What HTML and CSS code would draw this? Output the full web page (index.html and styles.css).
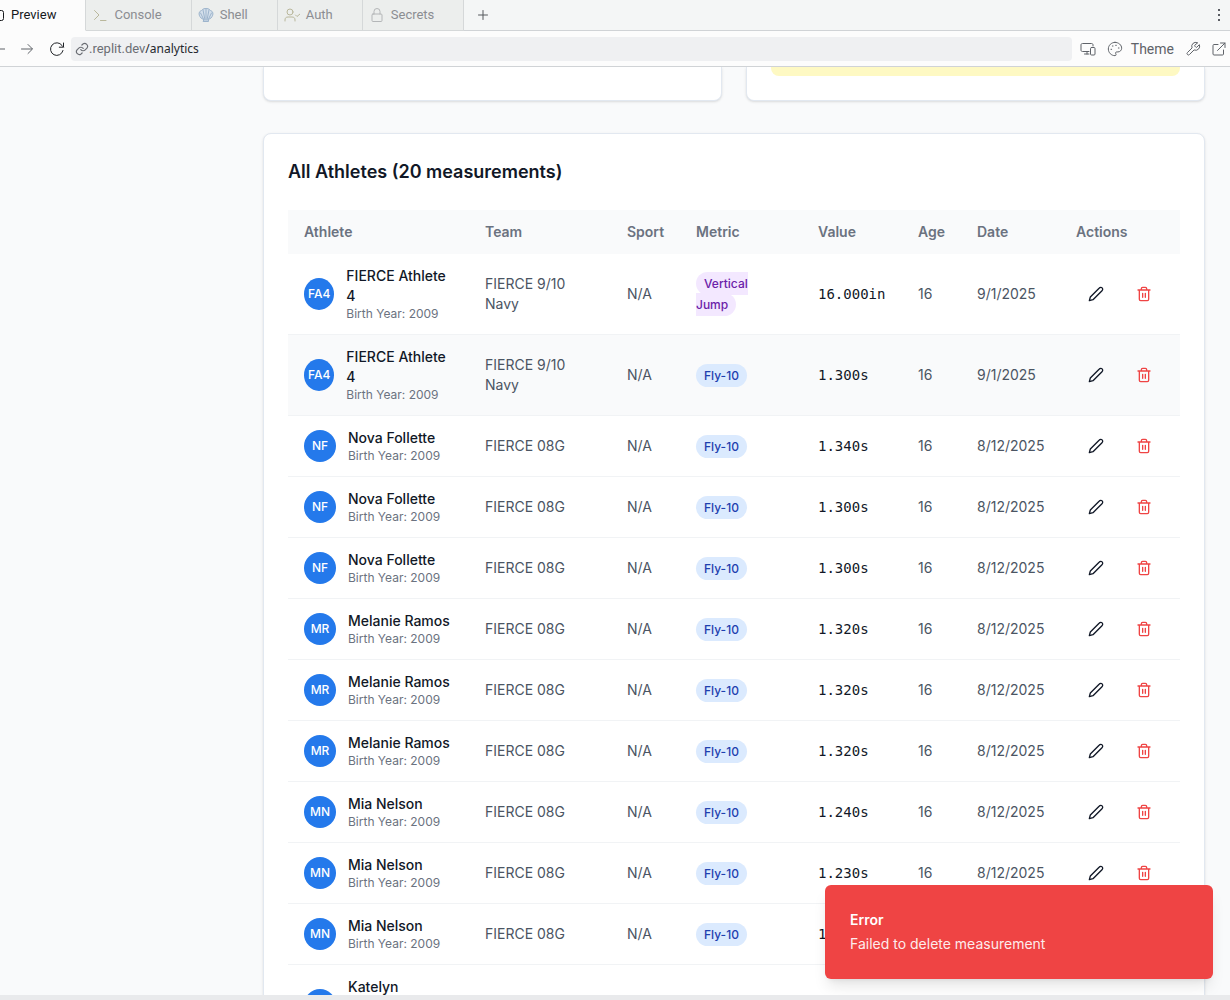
FILE: index.html
```html
<!DOCTYPE html>
<html lang="en">
<head>
<meta charset="utf-8">
<meta name="viewport" content="width=device-width, initial-scale=1">
<title>Analytics</title>
<link rel="stylesheet" href="styles.css">
</head>
<body>
<svg class="sprite" aria-hidden="true">
  <symbol id="pencil" viewBox="0 0 24 24"><path d="M17 3a2.85 2.83 0 1 1 4 4L7.500 20.500 2 22l1.500-5.500Z"/></symbol>
  <symbol id="trash" viewBox="0 0 24 24"><path d="M3 6h18M19 6v14c0 1-1 2-2 2H7c-1 0-2-1-2-2V6M8 6V4c0-1 1-2 2-2h4c1 0 2 1 2 2v2M10 11v6M14 11v6"/></symbol>
</svg>
<div class="window">
  <nav class="tabs">
    <button class="tab tab--active"><svg width="5" height="16" viewBox="11 0 5 16"><rect x="2" y="3.500" width="12.500" height="10" rx="2"/></svg>Preview</button>
    <button class="tab"><svg class="olive" width="16" height="16" viewBox="0 0 16 16"><path d="M2.500 3.500L7 8l-4.500 4.500M8.500 13.500h5.500"/></svg>Console</button>
    <button class="tab"><svg class="shell" width="16" height="16" viewBox="0 0 16 16"><path d="M5.500 12.500L3 11C-.5 7 1.500 4 3.500 3.500 5 1.500 7 1.500 8 1.500s3 0 4.500 2C14.500 4 16.500 7 13 11l-2.500 1.500v2h-5zM8 2v11M5 3l2 10M11 3L9 13M2.500 6L6 13M13.500 6L10 13"/></svg>Shell</button>
    <button class="tab"><svg class="olive" width="16" height="16" viewBox="0 0 16 16"><circle cx="6" cy="5" r="3"/><path d="M1 14v-1c0-2 1-3 3-3h4c2 0 3 1 3 3v1M11.500 8l1.500 1.500L16 7"/></svg>Auth</button>
    <button class="tab"><svg class="grey" width="16" height="16" viewBox="0 0 16 16"><rect x="3" y="7" width="10" height="7.500" rx="1"/><path d="M5 7V4.500a3 3 0 0 1 6 0V7"/></svg>Secrets</button>
    <button class="tab-new" aria-label="New tab"><svg width="10" height="10" viewBox="0 0 10 10"><path d="M5 .5v9M.5 5h9"/></svg></button>
    <button class="tab-menu" aria-label="Tab menu"><svg width="4" height="14" viewBox="0 0 4 14"><path d="M1 1h2v2H1zM1 6h2v2H1zM1 11h2v2H1z"/></svg></button>
  </nav>
  <div class="toolbar">
    <button aria-label="Back"><svg width="5" height="14" viewBox="9 0 5 14"><path d="M1 7h13"/></svg></button>
    <button aria-label="Forward"><svg width="14" height="14" viewBox="0 0 14 14"><path d="M1.500 7h10.500M8 2.500L12.500 7 8 11.500"/></svg></button>
    <button class="reload" aria-label="Reload"><svg width="16" height="16" viewBox="0 0 16 16"><path d="M14 9.500A6.300 6.300 0 1 1 13 4.500l1.500 1.500M14.500 2v4.200h-4.200"/></svg></button>
    <a class="address" href="#"><svg width="14" height="14" viewBox="0 0 24 24"><path d="M10 13a5 5 0 0 0 7.500.5l3-3a5 5 0 0 0-7-7l-1.700 1.700M14 11a5 5 0 0 0-7.500-.5l-3 3a5 5 0 0 0 7 7l1.700-1.700"/></svg><span>.replit.dev<b>/analytics</b></span></a>
    <div class="tools">
      <button aria-label="Devices"><svg width="16" height="16" viewBox="0 0 16 16"><path d="M9 10.500H2.500c-1 0-1.500-.5-1.500-1.500V4c0-1 .5-1.500 1.500-1.500h9c1 0 1.500.5 1.500 1.500v1M7 10.500V13M4.500 13H9"/><rect x="10.500" y="6.500" width="4.500" height="7.500" rx="1"/></svg></button>
      <button class="theme"><svg width="16" height="16" viewBox="0 0 24 24"><path d="M12 2C6.500 2 2 6.500 2 12s4.500 10 10 10c.9 0 1.600-.7 1.600-1.700 0-.4-.2-.8-.4-1.100-.3-.3-.4-.7-.4-1.100 0-.9.700-1.700 1.600-1.700h2c3 0 5.600-2.500 5.600-5.500C22 6 17.500 2 12 2z"/><path d="M13 6.500h1M17 10.500h1M8 7.500h1M6 12.500h1"/></svg>Theme</button>
      <button aria-label="Developer tools"><svg width="16" height="16" viewBox="0 0 24 24"><path d="M14.700 6.300a1 1 0 0 0 0 1.400l1.600 1.600a1 1 0 0 0 1.400 0l3.800-3.800a6 6 0 0 1-7.900 7.900l-6.900 6.900a2.100 2.100 0 0 1-3-3l6.900-6.900a6 6 0 0 1 7.900-7.900z"/></svg></button>
      <button aria-label="Open in new window"><svg width="14" height="14" viewBox="0 0 14 14"><path d="M6 2.500H2c-.6 0-1 .4-1 1V12c0 .6.400 1 1 1h8.500c.6 0 1-.4 1-1V8M5.500 8.500L13 1M8.500 1H13v4.500"/></svg></button>
    </div>
  </div>
  <div class="viewport">
    <main class="page">
      <div class="summary">
        <section class="card card--tail"></section>
        <section class="card card--tail"><div class="notice"></div></section>
      </div>
      <section class="card">
        <h2>All Athletes (20 measurements)</h2>
        <table>
          <colgroup><col class="c-athlete"><col class="c-team"><col class="c-sport"><col class="c-metric"><col class="c-value"><col class="c-age"><col class="c-date"><col class="c-actions"></colgroup>
          <thead><tr><th>Athlete</th><th>Team</th><th>Sport</th><th>Metric</th><th>Value</th><th>Age</th><th>Date</th><th>Actions</th></tr></thead>
          <tbody id="rows"></tbody>
        </table>
      </section>
    </main>
    <div class="toast" role="alert"><strong>Error</strong><p>Failed to delete measurement</p></div>
  </div>
</div>
<script src="rows.js"></script>
</body>
</html>
```
FILE: rows.js
```js
const measurements = [
  ["FA4", "FIERCE Athlete 4", "FIERCE 9/10 Navy", "Vertical Jump", "16.000in", "9/1/2025"],
  ["FA4", "FIERCE Athlete 4", "FIERCE 9/10 Navy", "Fly-10", "1.300s", "9/1/2025"],
  ["NF", "Nova Follette", "FIERCE 08G", "Fly-10", "1.340s", "8/12/2025"],
  ["NF", "Nova Follette", "FIERCE 08G", "Fly-10", "1.300s", "8/12/2025"],
  ["NF", "Nova Follette", "FIERCE 08G", "Fly-10", "1.300s", "8/12/2025"],
  ["MR", "Melanie Ramos", "FIERCE 08G", "Fly-10", "1.320s", "8/12/2025"],
  ["MR", "Melanie Ramos", "FIERCE 08G", "Fly-10", "1.320s", "8/12/2025"],
  ["MR", "Melanie Ramos", "FIERCE 08G", "Fly-10", "1.320s", "8/12/2025"],
  ["MN", "Mia Nelson", "FIERCE 08G", "Fly-10", "1.240s", "8/12/2025"],
  ["MN", "Mia Nelson", "FIERCE 08G", "Fly-10", "1.230s", "8/12/2025"],
  ["MN", "Mia Nelson", "FIERCE 08G", "Fly-10", "1", ""]
];

const action = (icon, label, tone) =>
  `<button class="action ${tone}" aria-label="${label}"><svg width="16" height="16"><use href="#${icon}"/></svg></button>`;

const row = ([initials, name, team, metric, value, date], i) => `
  <tr class="${i === 1 ? "hovered" : ""}">
    <td><div class="athlete"><span class="avatar">${initials}</span><div><div class="name">${name}</div><div class="birth">Birth Year: 2009</div></div></div></td>
    <td>${team}</td>
    <td>N/A</td>
    <td><span class="badge ${metric === "Fly-10" ? "badge--fly" : "badge--jump"}">${metric}</span></td>
    <td class="value">${value}</td>
    <td>${date && "16"}</td>
    <td>${date}</td>
    <td>${date && `<div class="actions">${action("pencil", "Edit", "")}${action("trash", "Delete", "danger")}</div>`}</td>
  </tr>`;

// The last row is cut off by the lower edge of the viewport.
const cutRow = `
  <tr>
    <td><div class="athlete athlete--tall"><span class="avatar"></span><div class="name">Katelyn</div></div></td>
    <td></td><td></td><td></td><td></td><td></td><td></td><td></td>
  </tr>`;

document.getElementById("rows").innerHTML = measurements.map(row).join("") + cutRow;
```
FILE: styles.css
```css
* { box-sizing: border-box; }
body { margin: 0; font: 14px/20px Inter, sans-serif; color: #111827; }
button { font: inherit; color: inherit; background: none; border: 0; padding: 0; display: flex; align-items: center; justify-content: center; }
svg { fill: none; stroke: currentColor; stroke-width: 1; stroke-linecap: round; stroke-linejoin: round; flex: none; display: block; }
.sprite { position: absolute; width: 0; height: 0; }
.window { display: flex; flex-direction: column; height: 100vh; overflow: hidden; }

.tabs { display: flex; flex: none; height: 31px; background: #f4f6f6; font: 13px/18px Roboto, sans-serif; color: #8b8d92; }
.tab { gap: 6px; padding: 0 29px 1px 6px; background: #eceeed; border: solid #d5d8d9; border-width: 0 1px 1px 0; }
.tab--active { padding-left: 0; background: #fcfcfc; color: #17191c; border-bottom-color: #fcfcfc; }
.tab-new { padding: 0 14px; color: #55585c; border-bottom: 1px solid #d0d3d6; }
.tab-menu { flex: 1; justify-content: flex-end; padding-right: 9px; border-bottom: 1px solid #d0d3d6; }
.tab-menu svg { fill: #5a5d63; stroke: none; }
.olive { color: #b9b79b; }
.shell { color: #9db4cc; fill: #d3dfeb; }
.grey { color: #b4b6b8; }

.toolbar { display: flex; flex: none; align-items: center; height: 36px; background: #fcfcfc; border-bottom: 1px solid #d0d3d6; color: #5f6369; }
.toolbar > button + button { margin-left: 15px; }
.toolbar > .reload { color: #202327; }
.address { display: flex; flex: 1; align-items: center; height: 24px; margin-left: 6px; padding-left: 4px; border-radius: 4px; background: #eff0f2; color: #6b6e74; text-decoration: none; font: 13px/18px Roboto, sans-serif; }
.address svg { stroke-width: 2; }
.address b { color: #25282d; font: 12px/18px "Noto Sans", sans-serif; }
.tools { display: flex; align-items: center; gap: 11px; padding: 0 4px 0 8px; }
.theme { gap: 8px; font: 14px/20px Roboto, sans-serif; }
.tools svg[viewBox="0 0 24 24"] { stroke-width: 1.500; }

.viewport { position: relative; flex: 1; min-height: 0; overflow: hidden; background: #f9fafb; border-bottom: 5px solid #e9eaec; }
.page { display: flex; flex-direction: column; gap: 32px; padding: 0 25px 0 263px; }
.summary { display: grid; grid-template-columns: 1fr 1fr; gap: 24px; }
.card { padding: 24px; background: #fff; border: 1px solid #e2e8f0; border-radius: 8px; box-shadow: 0 1px 3px rgba(0, 0, 0, .1), 0 1px 2px -1px rgba(0, 0, 0, .1); }
.card--tail { padding-top: 0; border-top: 0; border-radius: 0 0 8px 8px; }
.notice { height: 9px; background: #fef9c3; border-radius: 0 0 8px 8px; }
h2 { margin: 0 0 24px; font-size: 18px; line-height: 28px; font-weight: 600; }

table { width: 100%; table-layout: fixed; border-collapse: separate; border-spacing: 0; color: #4b5563; }
.c-athlete { width: 181px; }
.c-team { width: 142px; }
.c-sport { width: 69px; }
.c-metric { width: 122px; }
.c-value { width: 100px; }
.c-age { width: 59px; }
.c-date { width: 99px; }
.c-actions { width: 120px; }
th { padding: 12px 16px; text-align: left; font-weight: 600; color: #6b7280; background: #f9fafb; }
td { padding: 12px 16px; border-bottom: 1px solid #f1f3f5; }
.hovered td { background: #f9fafb; }
.athlete { display: flex; align-items: center; gap: 12px; }
.athlete--tall { height: 56px; }
.athlete--tall .name { align-self: flex-start; }
.avatar { display: flex; align-items: center; justify-content: center; width: 32px; height: 32px; border-radius: 50%; background: #2479eb; color: #fff; font-size: 12px; font-weight: 500; line-height: 16px; }
.name { color: #111827; font-weight: 500; }
.birth { font-size: 12px; line-height: 16px; color: #6b7280; }
.badge { padding: 4px 8px; border-radius: 12px; font-size: 12px; font-weight: 500; }
.badge--fly { background: #dbeafe; color: #1e40af; }
.badge--jump { background: #f3e8ff; color: #6b21a8; }
.value { font-family: "DejaVu Sans Mono", monospace; color: #111827; }
.actions { display: flex; gap: 8px; }
.action { width: 40px; height: 36px; flex: none; color: #111827; }
.action svg { stroke-width: 2; }
.action.danger { color: #ef4444; }

.toast { position: absolute; right: 17px; bottom: 16px; width: 388px; padding: 25px; border-radius: 6px; background: #ef4444; color: #fff; box-shadow: 0 10px 15px -3px rgba(0, 0, 0, .1), 0 4px 6px -4px rgba(0, 0, 0, .1); }
.toast strong { display: block; font-weight: 600; }
.toast p { margin: 4px 0 0; opacity: .9; }
```
